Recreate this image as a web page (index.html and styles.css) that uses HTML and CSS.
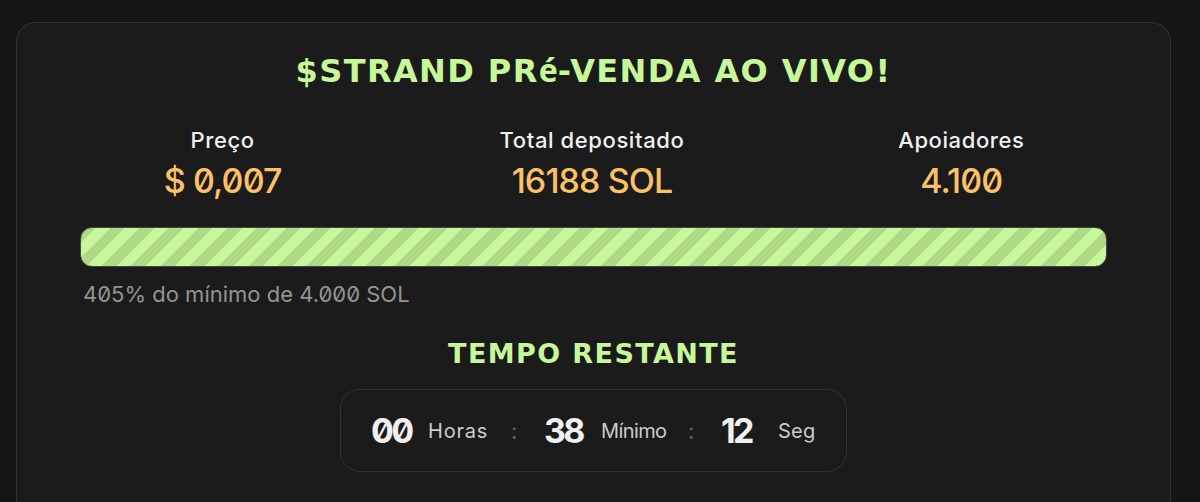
FILE: index.html
```html
<!DOCTYPE html>
<html lang="pt">
<head>
    <meta charset="UTF-8">
    <meta name="viewport" content="width=device-width, initial-scale=1.0">
    <title>$STRAND</title>
    <link rel="stylesheet" href="styles.css">
</head>
<body>
    <div class="presale">
        <h1>$STRAND PR<span class="accent">é</span>-VENDA AO VIVO!</h1>

        <div class="stats">
            <div class="stat">
                <div class="stat-label">Preço</div>
                <div class="stat-value">$ 0,007</div>
            </div>
            <div class="stat">
                <div class="stat-label">Total depositado</div>
                <div class="stat-value">16188 SOL</div>
            </div>
            <div class="stat">
                <div class="stat-label">Apoiadores</div>
                <div class="stat-value">4.100</div>
            </div>
        </div>

        <div class="progress"></div>
        <p class="progress-text">405% do mínimo de 4.000 SOL</p>

        <h2>TEMPO RESTANTE</h2>
        <div class="countdown">
            <span class="num">00</span>
            <span class="unit">Horas</span>
            <span class="sep">:</span>
            <span class="num">38</span>
            <span class="unit minutes">Mínimo</span>
            <span class="sep">:</span>
            <span class="num">12</span>
            <span class="unit seconds">Seg</span>
        </div>
    </div>
</body>
</html>
```
FILE: styles.css
```css
* {
    box-sizing: border-box;
}
body {
    margin: 0;
    background: #151515;
    color: #f0f0f0;
    font-family: Inter, "Noto Sans", sans-serif;
    font-feature-settings: "zero";
}
.presale {
    margin: 22px 29px 0 16px;
    height: 480px;
    padding: 24px 21px 0;
    background: #1b1b1b;
    border: 1px solid #323232;
    border-bottom: none;
    border-radius: 20px 20px 0 0;
    text-align: center;
}
h1, h2 {
    margin: 0;
    color: #c7f79b;
    font-family: "DejaVu Sans", sans-serif;
    font-weight: bold;
    white-space: nowrap;
}
h1 {
    font-size: 32px;
    line-height: 46px;
    letter-spacing: 1.4px;
}
h1 .accent {
    font-family: "Noto Sans", sans-serif;
    letter-spacing: 0;
}
.stats {
    display: grid;
    grid-template-columns: repeat(3, 1fr);
    margin-top: 33px;
    padding-right: 3px;
}
.stat-label {
    font-size: 22px;
    font-weight: 500;
    line-height: 26px;
    letter-spacing: 0.6px;
}
.stat-value {
    margin-top: 8px;
    color: #fbc168;
    font-size: 34px;
    line-height: 40px;
    font-weight: 500;
    letter-spacing: -0.9px;
}
.progress {
    height: 40px;
    margin: 26px 42px 0;
    border: 1px solid #454545;
    border-radius: 12px;
    background: repeating-linear-gradient(135deg, #b0d987 0, #b0d987 10.37px, #c7f79b 10.37px, #c7f79b 20.74px);
}
.progress-text {
    margin: 13px 45px 0;
    color: #949494;
    font-size: 22px;
    line-height: 28px;
    text-align: left;
}
h2 {
    margin-top: 31px;
    font-size: 27px;
    line-height: 30px;
    letter-spacing: 1.4px;
}
.countdown {
    display: flex;
    align-items: center;
    width: 507px;
    height: 83px;
    margin: 20px auto 0;
    padding-left: 30px;
    border: 1px solid #323232;
    border-radius: 20px;
    text-align: left;
}
.num {
    flex: none;
    width: 57px;
    font-size: 34px;
    font-weight: 700;
    letter-spacing: -2.6px;
}
.unit {
    flex: none;
    width: 83px;
    color: #ccc;
    font-size: 20px;
    letter-spacing: 0.8px;
}
.unit.minutes {
    width: 87px;
    letter-spacing: -0.6px;
}
.unit.seconds {
    width: auto;
    letter-spacing: 0.2px;
}
.sep {
    flex: none;
    width: 33px;
    color: #666;
    font-size: 22px;
}
```
